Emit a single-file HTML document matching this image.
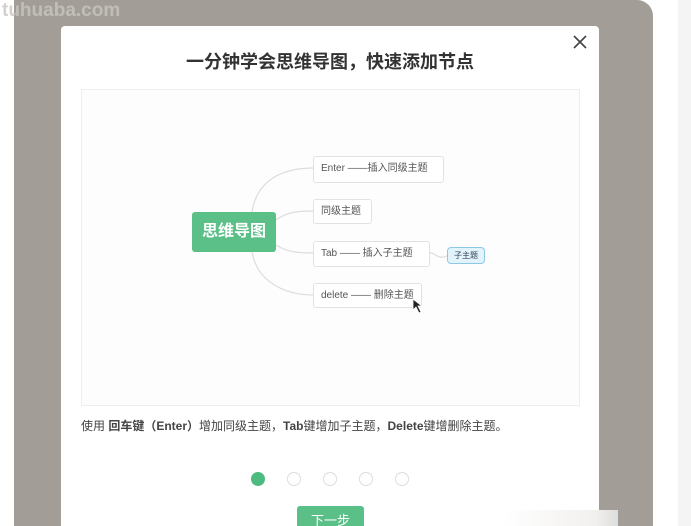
<!DOCTYPE html>
<html style="overflow:hidden;width:691px;height:526px"><head><meta charset="utf-8"><style>
body{margin:0;width:691px;height:526px;overflow:hidden;background:#fff;position:relative;font-family:"Liberation Sans","Noto Sans CJK SC",sans-serif;}
.ov{position:absolute;left:14px;top:0;width:639px;height:526px;background:#a29e97;border-top-right-radius:16px;}
.strip{position:absolute;left:678px;top:0;width:13px;height:526px;background:#f4f4f4;}
.wm{position:absolute;left:2px;top:0;font-size:19px;font-weight:bold;color:#c9c6c1;opacity:.8}
.modal{position:absolute;left:61px;top:26px;width:538px;height:500px;background:#fff;border-radius:4px 4px 0 0;overflow:hidden;}
.title{position:absolute;left:0;width:538px;top:22px;text-align:center;font-size:18px;font-weight:bold;color:#333;}
.x{position:absolute;left:511px;top:8px;}
.box{position:absolute;left:20px;top:63px;width:497px;height:315px;border:1px solid #eee;background:#fdfdfd;}
.n{position:absolute;border:1px solid #e2e2e2;border-radius:3px;background:#fff;font-size:10px;color:#555;line-height:24px;padding-left:7px;box-sizing:border-box;}
.c{position:absolute;left:110px;top:122px;width:84px;height:40px;background:#5bbf88;border-radius:3px;color:#fff;font-size:16px;font-weight:bold;line-height:40px;text-align:center;}
.desc{position:absolute;left:20px;top:391px;font-size:12px;color:#444;}
.dot{position:absolute;top:446px;width:14px;height:14px;border:1.5px solid #ddd;border-radius:50%;box-sizing:border-box;}
.btn{position:absolute;left:236px;top:480px;width:67px;height:30px;background:#5bbf88;border-radius:3px;color:#fff;font-size:13px;text-align:center;line-height:30px;}
.wb{position:absolute;left:504px;top:510px;width:114px;height:16px;background:linear-gradient(90deg,#fff,#f2f0ee 80%,#ddd);}
</style></head><body>
<div class="ov"></div><div class="strip"></div>
<div class="wm">tuhuaba.com</div>
<div class="modal">
<div class="title">一分钟学会思维导图，快速添加节点</div>
<svg class="x" width="16" height="16"><path d="M2 2 L14 14 M14 2 L2 14" stroke="#444" stroke-width="1.6"/></svg>
<div class="box">
<svg width="497" height="315" style="position:absolute;left:0;top:0" fill="none" stroke="#ddd" stroke-width="1.2">
<path d="M170 122 C175 90 200 78 232 78"/>
<path d="M194 130 C205 122 215 121 232 121"/>
<path d="M194 155 C205 162 215 163 232 163"/>
<path d="M170 162 C175 190 200 205 232 205"/>
<path d="M348 163 C355 163 355 170 365 166"/>
</svg>
<div class="c">思维导图</div>
<div class="n" style="left:231px;top:66px;width:131px;height:27px">Enter ——插入同级主题</div>
<div class="n" style="left:231px;top:109px;width:59px;height:25px">同级主题</div>
<div class="n" style="left:231px;top:151px;width:117px;height:26px">Tab —— 插入子主题</div>
<div class="n" style="left:231px;top:193px;width:109px;height:25px">delete —— 删除主题</div>
<div style="position:absolute;left:365px;top:157px;width:36px;height:15px;background:#e3f3fb;border:1px solid #8cc8e6;border-radius:4px;font-size:8px;line-height:15px;text-align:center;color:#345">子主题</div>
<svg style="position:absolute;left:330px;top:208px" width="12" height="16"><path d="M1 1 L1 12 L4 9 L7 15 L9 14 L6 8 L10 8 Z" fill="#222" stroke="#fff" stroke-width=".8"/></svg>
</div>
<div class="desc">使用 <b>回车键（Enter）</b>增加同级主题，<b>Tab</b>键增加子主题，<b>Delete</b>键增删除主题。</div>
<div class="dot" style="left:190px;background:#4dbb7f;border-color:#4dbb7f"></div>
<div class="dot" style="left:226px"></div>
<div class="dot" style="left:262px"></div>
<div class="dot" style="left:298px"></div>
<div class="dot" style="left:334px"></div>
<div class="btn">下一步</div>
</div>
<div class="wb"></div>
</body></html>
